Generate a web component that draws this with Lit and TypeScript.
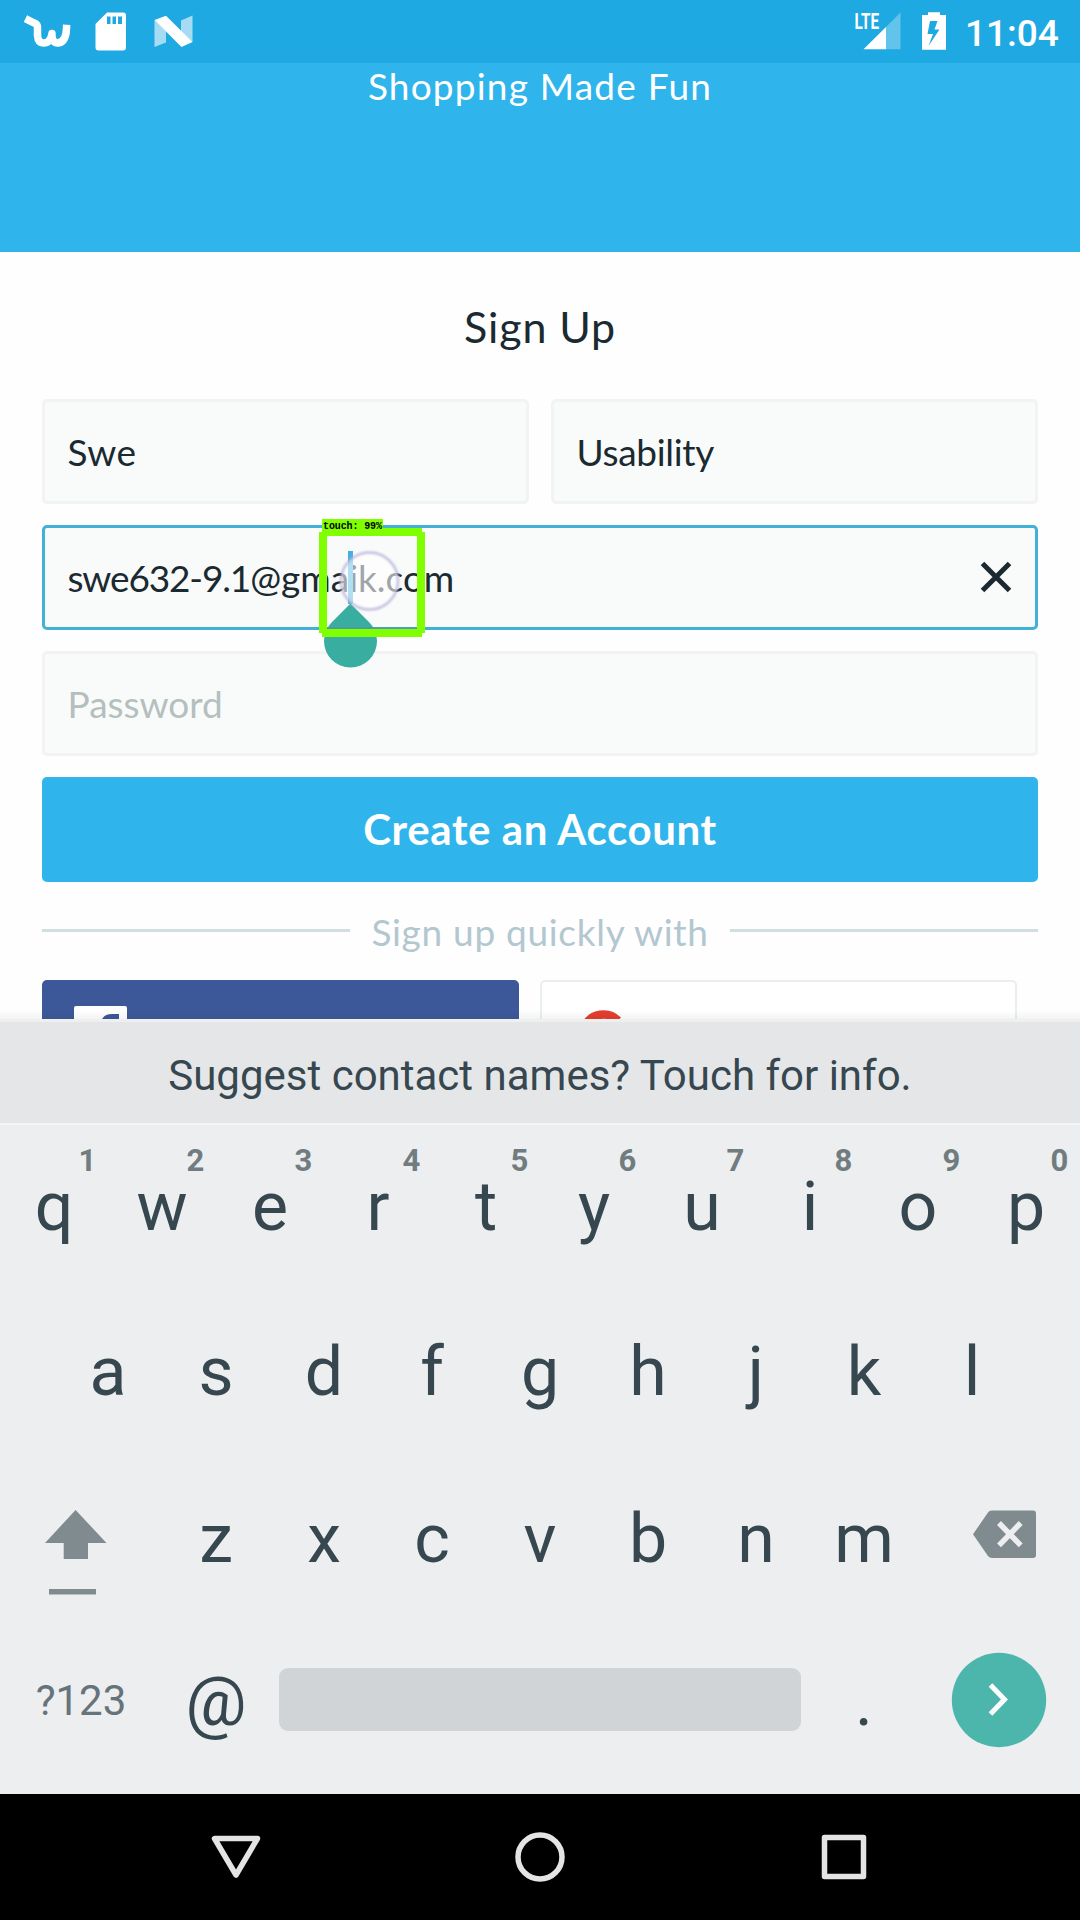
import { LitElement, html, css, svg } from "lit";
import { customElement, property } from "lit/decorators.js";

@customElement("status-bar")
class StatusBar extends LitElement {
  static styles = css`
    :host {
      display: flex;
      flex: none;
      justify-content: space-between;
      height: 63px;
      background: #1fa9e2;
      color: #fff;
      font-family: Roboto, sans-serif;
    }
    svg { display: block; }
    .right { display: flex; }
    .time {
      width: 115px;
      font-size: 37px;
      font-weight: 500;
      line-height: 67px;
    }
    .lte {
      font: 700 22px Roboto, sans-serif;
      fill: #fff;
    }
  `;
  render() {
    return html`
      <svg width="220" height="63" viewBox="0 0 220 63" fill="#fff">
        <path d="M28.8 20.300 L36 23.800 Q37.800 25 37.500 29 V35.500 Q38 43 43.500 43 Q50.500 43 52 33.500 Q51.500 43 58 43 Q66 42 66.500 28.500"
          fill="none" stroke="#fff" stroke-width="7.500" stroke-linejoin="round" stroke-linecap="square" />
        <path fill-rule="evenodd" d="M107 12.500H123Q126 12.500 126 15.500V47.500Q126 50.500 123 50.500H98.500Q95.500 50.500 95.500 47.500V24Z
          M107 16.500V24H110.500V16.500Z M112.500 16.500V24H116V16.500Z M118 16.500V24H122V16.500Z" />
        <path opacity=".6" d="M154.500 20L166 31V42.500L154.500 47Z M181 20.500L192.500 15.500V42L181 32Z" />
        <path d="M154.500 20L166 15.700L192.500 42L181.500 47Z" />
      </svg>
      <div class="right">
        <svg width="118" height="63" viewBox="847 0 118 63" fill="#fff">
          <path opacity=".3" d="M886 27L900.500 12.500V49.300H886Z" />
          <path d="M863.500 49.300L886 27V49.300Z" />
          <text class="lte" x="854.500" y="29.300" textLength="24.500" lengthAdjust="spacingAndGlyphs">LTE</text>
          <path fill-rule="evenodd" d="M928 12.300H940V15H946V49.700H922V15H928Z
            M930 21L927.500 34H933L928.500 46L939.500 29.500H934.500L937.500 21Z" />
        </svg>
        <div class="time">11:04</div>
      </div>
    `;
  }
}

@customElement("text-field")
class TextField extends LitElement {
  @property() value = "";
  @property() domain = "";
  @property() placeholder = "";
  @property({ type: Boolean, reflect: true }) active = false;
  static styles = css`
    :host {
      box-sizing: border-box;
      display: flex;
      flex: 1;
      align-items: center;
      justify-content: space-between;
      height: 105px;
      padding: 0 23px 0 22.5px;
      border: 3px solid #f1f3f4;
      border-radius: 5px;
      background: #f9fbfb;
      color: #1b2a30;
      font: 37px Lato, sans-serif;
      position: relative;
    }
    :host([active]) { border-color: #43b1d7; letter-spacing: -1.15px; }
    :host(.tight) { letter-spacing: -0.3px; }
    :host(.loose) { letter-spacing: 0.4px; }
    .domain { letter-spacing: 0; }
    .hint { color: #b4bfbe; }
    svg { margin-top: -1px; }
    slot { display: contents; }
  `;
  render() {
    return html`
      ${this.value
        ? html`<span>${this.value}<span class="domain">${this.domain}</span></span>`
        : html`<span class="hint">${this.placeholder}</span>`}
      ${this.active
        ? html`<svg width="32" height="32" viewBox="0 0 32 32"><path d="M2.500 2.500L29.500 29.500M29.500 2.500L2.500 29.500" stroke="#1b2a30" stroke-width="5" /></svg>`
        : null}
      <slot></slot>
    `;
  }
}

@customElement("touch-overlay")
class TouchOverlay extends LitElement {
  static styles = css`
    :host {
      position: absolute;
      left: 270px;
      top: -12px;
      width: 120px;
      height: 156px;
      z-index: 2;
      letter-spacing: 0;
    }
    svg { display: block; overflow: visible; }
    .tag {
      font: 700 10px "Liberation Mono", monospace;
      fill: #000;
    }
  `;
  render() {
    return html`
      <svg width="120" height="156" viewBox="315 516 120 156">
        <defs>
          <filter id="soft" x="-20%" y="-20%" width="140%" height="140%"><feGaussianBlur stdDeviation="0.8" /></filter>
        </defs>
        <rect x="348" y="551" width="5" height="53" fill="#43b0e0" />
        <path d="M350.500 603.500L369.200 622.300A26.500 26.500 0 1 1 331.800 622.300Z" fill="#38ada0" />
        <circle cx="369.500" cy="581" r="28.500" fill="#fff" fill-opacity=".58" />
        <circle cx="369.500" cy="581" r="28.500" fill="none" stroke="#b9b3d8" stroke-width="2.500" opacity=".85" filter="url(#soft)" />
        <rect x="327" y="627" width="90" height="3" fill="#5b8fa0" opacity=".6" />
        <g fill="#7fff00">
          <rect x="322" y="528" width="100" height="8" />
          <rect x="322" y="629" width="100" height="8" />
          <rect x="319" y="532" width="8" height="101" />
          <rect x="417" y="532" width="8" height="101" />
          <rect x="322" y="519" width="61" height="11" />
        </g>
        <text class="tag" x="323" y="529" textLength="59">touch: 99%</text>
      </svg>
    `;
  }
}

@customElement("sign-up-form")
class SignUpForm extends LitElement {
  static styles = css`
    :host {
      display: flex;
      flex: none;
      flex-direction: column;
      height: 959px;
      overflow: hidden;
      background: #fefefe;
      font-family: Lato, sans-serif;
      position: relative;
    }
    .banner {
      flex: none;
      height: 189px;
      background: #2fb5eb;
      color: #fff;
      font-size: 37px;
      line-height: 45px;
      text-align: center;
      letter-spacing: 1.2px;
    }
    .body {
      display: flex;
      flex: none;
      flex-direction: column;
      gap: 21px;
      padding: 0 42px;
    }
    .title {
      height: 126px;
      font-size: 43px;
      line-height: 150px;
      text-align: center;
      color: #1b2a30;
      letter-spacing: 0.9px;
    }
    .row { display: flex; gap: 22px; }
    .create {
      height: 105px;
      border-radius: 5px;
      background: #2fb5eb;
      color: #fff;
      font-size: 42px;
      font-weight: 700;
      line-height: 105px;
      text-align: center;
      letter-spacing: 0.6px;
    }
    .divider {
      box-sizing: border-box;
      display: flex;
      align-items: center;
      gap: 21.5px;
      height: 56px;
      padding-top: 1px;
      color: #b2c7d0;
      font-size: 37px;
      letter-spacing: 0.7px;
    }
    .divider i { flex: 1; height: 3px; margin-top: -3px; background: #d3dee2; }
    .social { display: flex; gap: 21px; }
    .btn { box-sizing: border-box; width: 477px; height: 105px; border-radius: 5px; }
    .fb { background: #3c5899; padding: 26px 32px; }
    .goog { border: 2px solid #e9eef0; background: #fff; padding: 27px 35px; }
    svg { display: block; }
    .shade {
      position: absolute;
      inset: auto 0 0 0;
      height: 12px;
      background: linear-gradient(rgba(0, 0, 0, 0), rgba(0, 0, 0, 0.06));
    }
    .edge { position: absolute; inset: auto 0 0 0; height: 3px; background: #eeefef; }
  `;
  render() {
    return html`
      <div class="banner">Shopping Made Fun</div>
      <div class="body">
        <div class="title">Sign Up</div>
        <div class="row">
          <text-field class="loose" value="Swe"></text-field>
          <text-field class="tight" value="Usability"></text-field>
        </div>
        <div class="row">
          <text-field active value="swe632-9.1" domain="@gmaik.com"><touch-overlay></touch-overlay></text-field>
        </div>
        <div class="row"><text-field placeholder="Password"></text-field></div>
        <div class="create">Create an Account</div>
        <div class="divider"><i></i><span>Sign up quickly with</span><i></i></div>
        <div class="social">
          <div class="btn fb">
            <svg width="53" height="53" viewBox="0 0 53 53">
              <rect width="53" height="53" rx="2" fill="#fff" />
              <path d="M45 8v8h-5q-4 0-4 4v6h9l-1 9h-8v18h-9V35h-7v-9h7v-7q0-11 11-11z" fill="#3c5899" />
            </svg>
          </div>
          <div class="btn goog">
            <svg width="52" height="52" viewBox="0 0 52 52" fill="none" stroke-width="8.500">
              <path d="M8 17A20.500 20.500 0 0 1 41 11.500" stroke="#e33e30" />
              <path d="M8 17A20.500 20.500 0 0 0 8 35" stroke="#fbbc05" />
              <path d="M8 35A20.500 20.500 0 0 0 40 41" stroke="#34a853" />
              <path d="M40 41Q46 35 46 26H26" stroke="#4285f4" />
            </svg>
          </div>
        </div>
      </div>
      <div class="shade"></div>
      <div class="edge"></div>
    `;
  }
}

const shiftIcon = svg`
  <path d="M75.600 57L106.500 90H88V106H63.700V90H45Z" fill="#7f8b8f" />
  <rect x="49" y="136" width="47" height="5.500" fill="#7f8b8f" />`;
const backspaceIcon = svg`
  <path d="M72 57.500H115Q118 57.500 118 60.500V102Q118 105 115 105H74Q71.500 105 70 103L55 81.300L70 59.500Q71 57.500 74 57.500Z" fill="#7f8b8f" />
  <path d="M81 70L102.700 92.300M102.700 70L81 92.300" stroke="#eceeef" stroke-width="5.500" />`;

@customElement("soft-keyboard")
class SoftKeyboard extends LitElement {
  static styles = css`
    :host {
      display: flex;
      flex: none;
      flex-direction: column;
      height: 772px;
      background: #eceeef;
      color: #37474f;
      font-family: Roboto, sans-serif;
    }
    .suggest {
      box-sizing: border-box;
      height: 101px;
      padding-top: 6px;
      background: #e4e6e7;
      box-shadow: 0 2px #f4f5f6;
      font-size: 42px;
      line-height: 95px;
      text-align: center;
    }
    .keys { display: flex; justify-content: center; height: 165px; }
    .key {
      position: relative;
      width: 108px;
      font-size: 68px;
      line-height: 168px;
      text-align: center;
    }
    .low .key { line-height: 172px; }
    .key.wide { width: 162px; }
    .key.sym { font-size: 42px; line-height: 165px; color: #66737a; }
    .num {
      position: absolute;
      top: 22px;
      left: 67px;
      width: 41px;
      font-size: 31px;
      font-weight: 700;
      line-height: 31px;
      color: #707c7f;
    }
    .space { width: 540px; display: flex; align-items: center; justify-content: center; }
    .space div { width: 522px; height: 63px; margin-top: -3px; border-radius: 9px; background: #d0d4d7; }
    svg { display: block; }
  `;
  render() {
    const key = (c: string, n = "") =>
      html`<div class="key">${c}${n ? html`<span class="num">${n}</span>` : null}</div>`;
    return html`
      <div class="suggest">Suggest contact names? Touch for info.</div>
      <div class="keys">${[..."qwertyuiop"].map((c, i) => key(c, String((i + 1) % 10)))}</div>
      <div class="keys">${[..."asdfghjkl"].map((c) => key(c))}</div>
      <div class="keys low">
        <svg width="162" height="165">${shiftIcon}</svg>
        ${[..."zxcvbnm"].map((c) => key(c))}
        <svg width="162" height="165">${backspaceIcon}</svg>
      </div>
      <div class="keys">
        <div class="key wide sym">?123</div>
        ${key("@")}
        <div class="space"><div></div></div>
        ${key(".")}
        <svg width="162" height="165">
          <circle cx="81" cy="82" r="47.200" fill="#4db6ac" />
          <path d="M72.500 67L86.500 81.500L72.500 96" fill="none" stroke="#fff" stroke-width="5" />
        </svg>
      </div>
    `;
  }
}

@customElement("nav-bar")
class NavBar extends LitElement {
  static styles = css`
    :host {
      display: flex;
      flex: none;
      justify-content: center;
      gap: 248px;
      align-items: center;
      height: 126px;
      background: #000;
    }
    svg { display: block; fill: none; stroke: #e4e4e4; stroke-width: 5.5; stroke-linejoin: round; }
  `;
  render() {
    return html`
      <svg width="56" height="56" viewBox="-28 -28 56 56"><path d="M-21.500 -18.500H21.500L0 18Z" /></svg>
      <svg width="56" height="56" viewBox="-28 -28 56 56"><circle r="22" /></svg>
      <svg width="56" height="56" viewBox="-28 -28 56 56"><rect x="-19.500" y="-19.500" width="39" height="39" /></svg>
    `;
  }
}

@customElement("app-root")
class AppRoot extends LitElement {
  static styles = css`
    :host {
      display: flex;
      flex-direction: column;
      width: 1080px;
      height: 1920px;
      overflow: hidden;
      background: #fefefe;
    }
  `;
  render() {
    return html`
      <status-bar></status-bar>
      <sign-up-form></sign-up-form>
      <soft-keyboard></soft-keyboard>
      <nav-bar></nav-bar>
    `;
  }
}
